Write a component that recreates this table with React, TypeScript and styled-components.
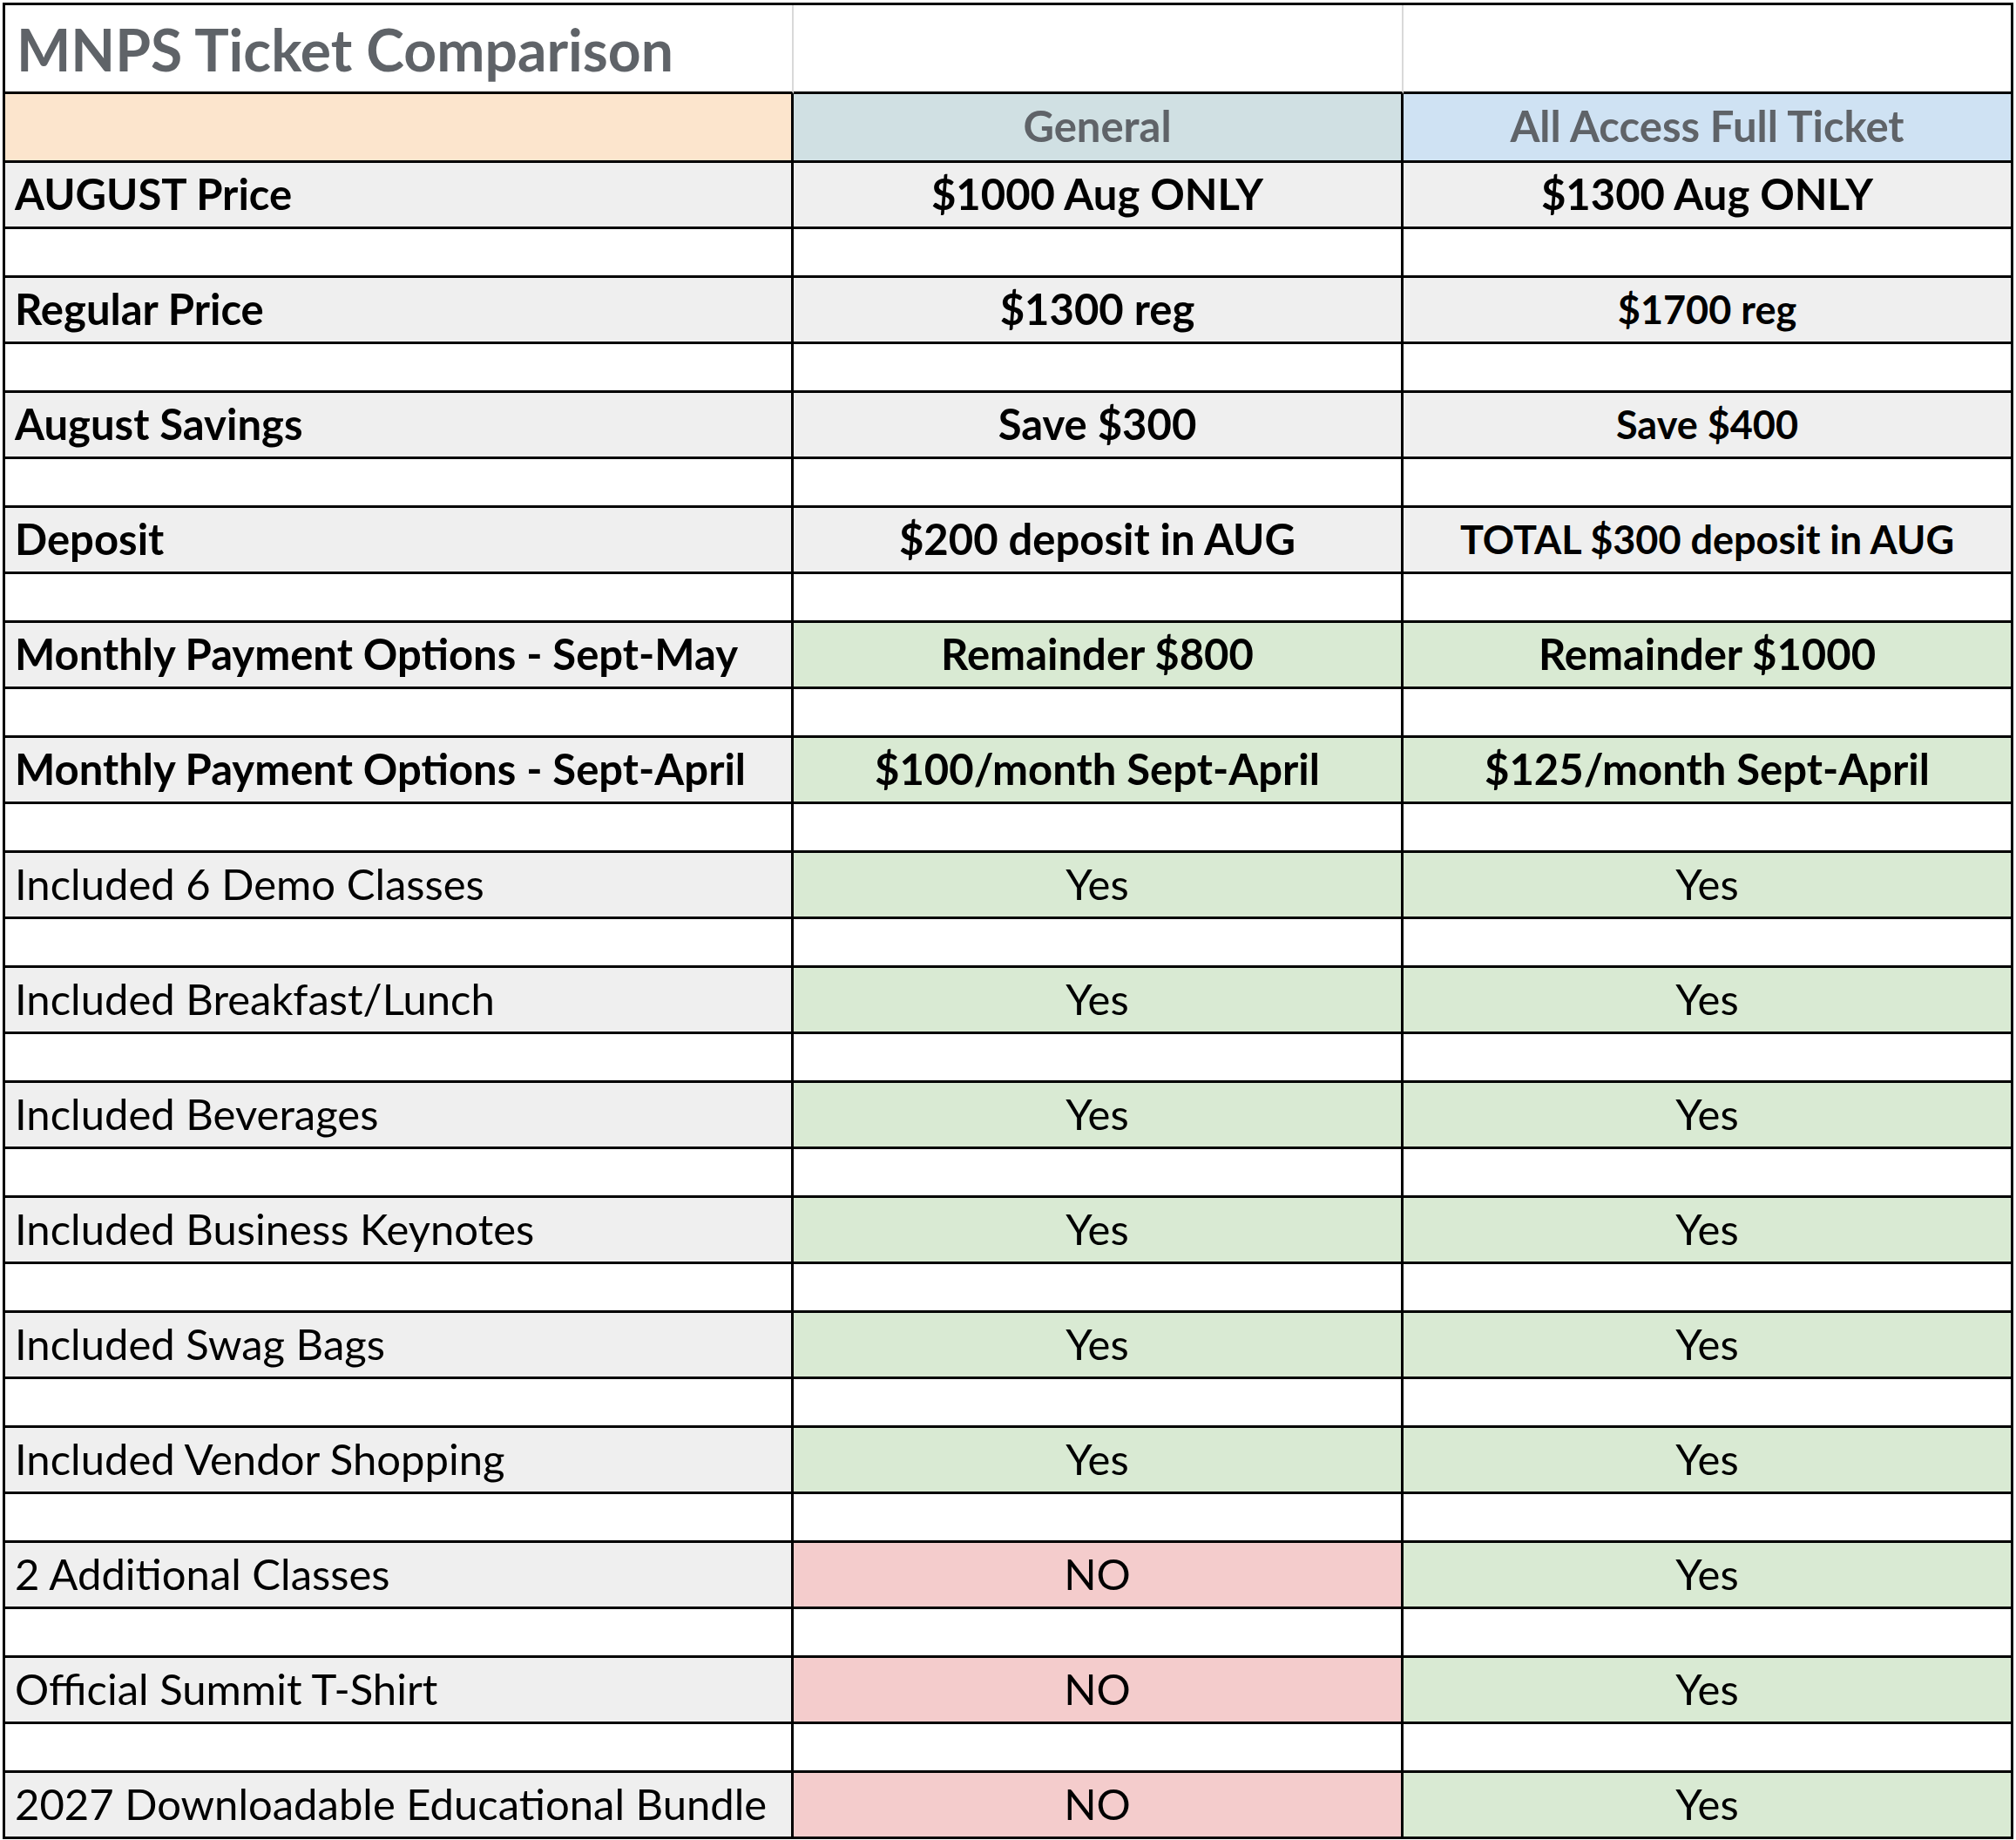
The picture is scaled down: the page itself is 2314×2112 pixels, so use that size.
import styled, { createGlobalStyle } from "styled-components";

type Tone = "white" | "gray" | "green" | "red" | "peach" | "teal" | "blue";

const TONES: Record<Tone, string> = {
  white: "#ffffff",
  gray: "#efefef",
  green: "#d9ead3",
  red: "#f4cccc",
  peach: "#fce5cd",
  teal: "#d0e0e3",
  blue: "#cfe2f3",
};

type Value = { text: string; tone: Tone; small?: boolean };

type Row = {
  label: string;
  bold?: boolean;
  values: [Value, Value];
};

const gray = (text: string, small?: boolean): Value => ({ text, tone: "gray", small });
const green = (text: string): Value => ({ text, tone: "green" });
const red = (text: string): Value => ({ text, tone: "red" });

const ROWS: Row[] = [
  { label: "AUGUST Price", bold: true, values: [gray("$1000 Aug ONLY"), gray("$1300 Aug ONLY")] },
  { label: "Regular Price", bold: true, values: [gray("$1300 reg"), gray("$1700 reg", true)] },
  { label: "August Savings", bold: true, values: [gray("Save $300"), gray("Save $400", true)] },
  { label: "Deposit", bold: true, values: [gray("$200 deposit in AUG"), gray("TOTAL $300 deposit in AUG", true)] },
  {
    label: "Monthly Payment Options - Sept-May",
    bold: true,
    values: [green("Remainder $800"), green("Remainder $1000")],
  },
  {
    label: "Monthly Payment Options - Sept-April",
    bold: true,
    values: [green("$100/month Sept-April"), green("$125/month Sept-April")],
  },
  { label: "Included 6 Demo Classes", values: [green("Yes"), green("Yes")] },
  { label: "Included Breakfast/Lunch", values: [green("Yes"), green("Yes")] },
  { label: "Included Beverages", values: [green("Yes"), green("Yes")] },
  { label: "Included Business Keynotes", values: [green("Yes"), green("Yes")] },
  { label: "Included Swag Bags", values: [green("Yes"), green("Yes")] },
  { label: "Included Vendor Shopping", values: [green("Yes"), green("Yes")] },
  { label: "2 Additional Classes", values: [red("NO"), green("Yes")] },
  { label: "Official Summit T-Shirt", values: [red("NO"), green("Yes")] },
  { label: "2027 Downloadable Educational Bundle", values: [red("NO"), green("Yes")] },
];

export default function App() {
  const rowSizes = ["102px", "79px"];
  ROWS.forEach((_, i) => {
    rowSizes.push("76px");
    if (i < ROWS.length - 1) rowSizes.push("56px");
  });

  return (
    <>
      <GlobalStyle />
      <St.Sheet style={{ gridTemplateRows: rowSizes.join(" ") }}>
        <St.TitleCell>MNPS Ticket Comparison</St.TitleCell>
        <St.TitleCell />
        <St.TitleCell $last />

        <St.HeaderCell $tone="peach" />
        <St.HeaderCell $tone="teal" $center>
          General
        </St.HeaderCell>
        <St.HeaderCell $tone="blue" $center>
          All Access Full Ticket
        </St.HeaderCell>

        {ROWS.map((row, i) => (
          <Line key={row.label} row={row} spacer={i < ROWS.length - 1} />
        ))}
      </St.Sheet>
    </>
  );
}

function Line({ row, spacer }: { row: Row; spacer: boolean }) {
  return (
    <>
      <St.Cell $tone="gray" $bold={row.bold}>
        {row.label}
      </St.Cell>
      {row.values.map((v, i) => (
        <St.Cell key={i} $tone={v.tone} $bold={row.bold} $small={v.small} $center>
          {v.text}
        </St.Cell>
      ))}
      {spacer && (
        <>
          <St.Cell $tone="white" />
          <St.Cell $tone="white" />
          <St.Cell $tone="white" />
        </>
      )}
    </>
  );
}

const GlobalStyle = createGlobalStyle`
  html, body {
    margin: 0;
    padding: 0;
    background: #ffffff;
  }
  body {
    font-family: Lato, "Open Sans", "Liberation Sans", sans-serif;
    color: #000000;
  }
`;

const St = {
  Sheet: styled.div`
    display: grid;
    grid-template-columns: 905px 700px 700px;
    margin: 3px 0 0 3px;
    width: max-content;
    border-top: 3px solid #000;
    border-left: 3px solid #000;
  `,
  TitleCell: styled.div<{ $last?: boolean }>`
    box-sizing: border-box;
    display: flex;
    align-items: flex-end;
    padding: 0 0 15px 13px;
    background: #ffffff;
    border-bottom: 3px solid #000;
    border-right: ${({ $last }) => ($last ? "3px solid #000" : "2px solid #d9d9d9")};

    font-size: 66px;
    font-weight: 700;
    line-height: 1;
    color: #5f6368;
    white-space: nowrap;
  `,
  HeaderCell: styled.div<{ $tone: Tone; $center?: boolean }>`
    box-sizing: border-box;
    display: flex;
    align-items: flex-end;
    justify-content: ${({ $center }) => ($center ? "center" : "flex-start")};
    padding-bottom: 15px;
    background: ${({ $tone }) => TONES[$tone]};
    border-right: 3px solid #000;
    border-bottom: 3px solid #000;

    font-size: 49px;
    font-weight: 700;
    line-height: 1;
    color: #5f6368;
    white-space: nowrap;
  `,
  Cell: styled.div<{ $tone: Tone; $bold?: boolean; $center?: boolean; $small?: boolean }>`
    box-sizing: border-box;
    display: flex;
    align-items: flex-end;
    justify-content: ${({ $center }) => ($center ? "center" : "flex-start")};
    padding: 0 0 ${({ $small }) => ($small ? "14px" : "13px")} ${({ $center }) => ($center ? "0" : "11px")};
    background: ${({ $tone }) => TONES[$tone]};
    border-right: 3px solid #000;
    border-bottom: 3px solid #000;

    font-size: ${({ $small }) => ($small ? "45px" : "49px")};
    font-weight: ${({ $bold }) => ($bold ? 700 : 400)};
    line-height: 1;
    white-space: nowrap;
  `,
};
